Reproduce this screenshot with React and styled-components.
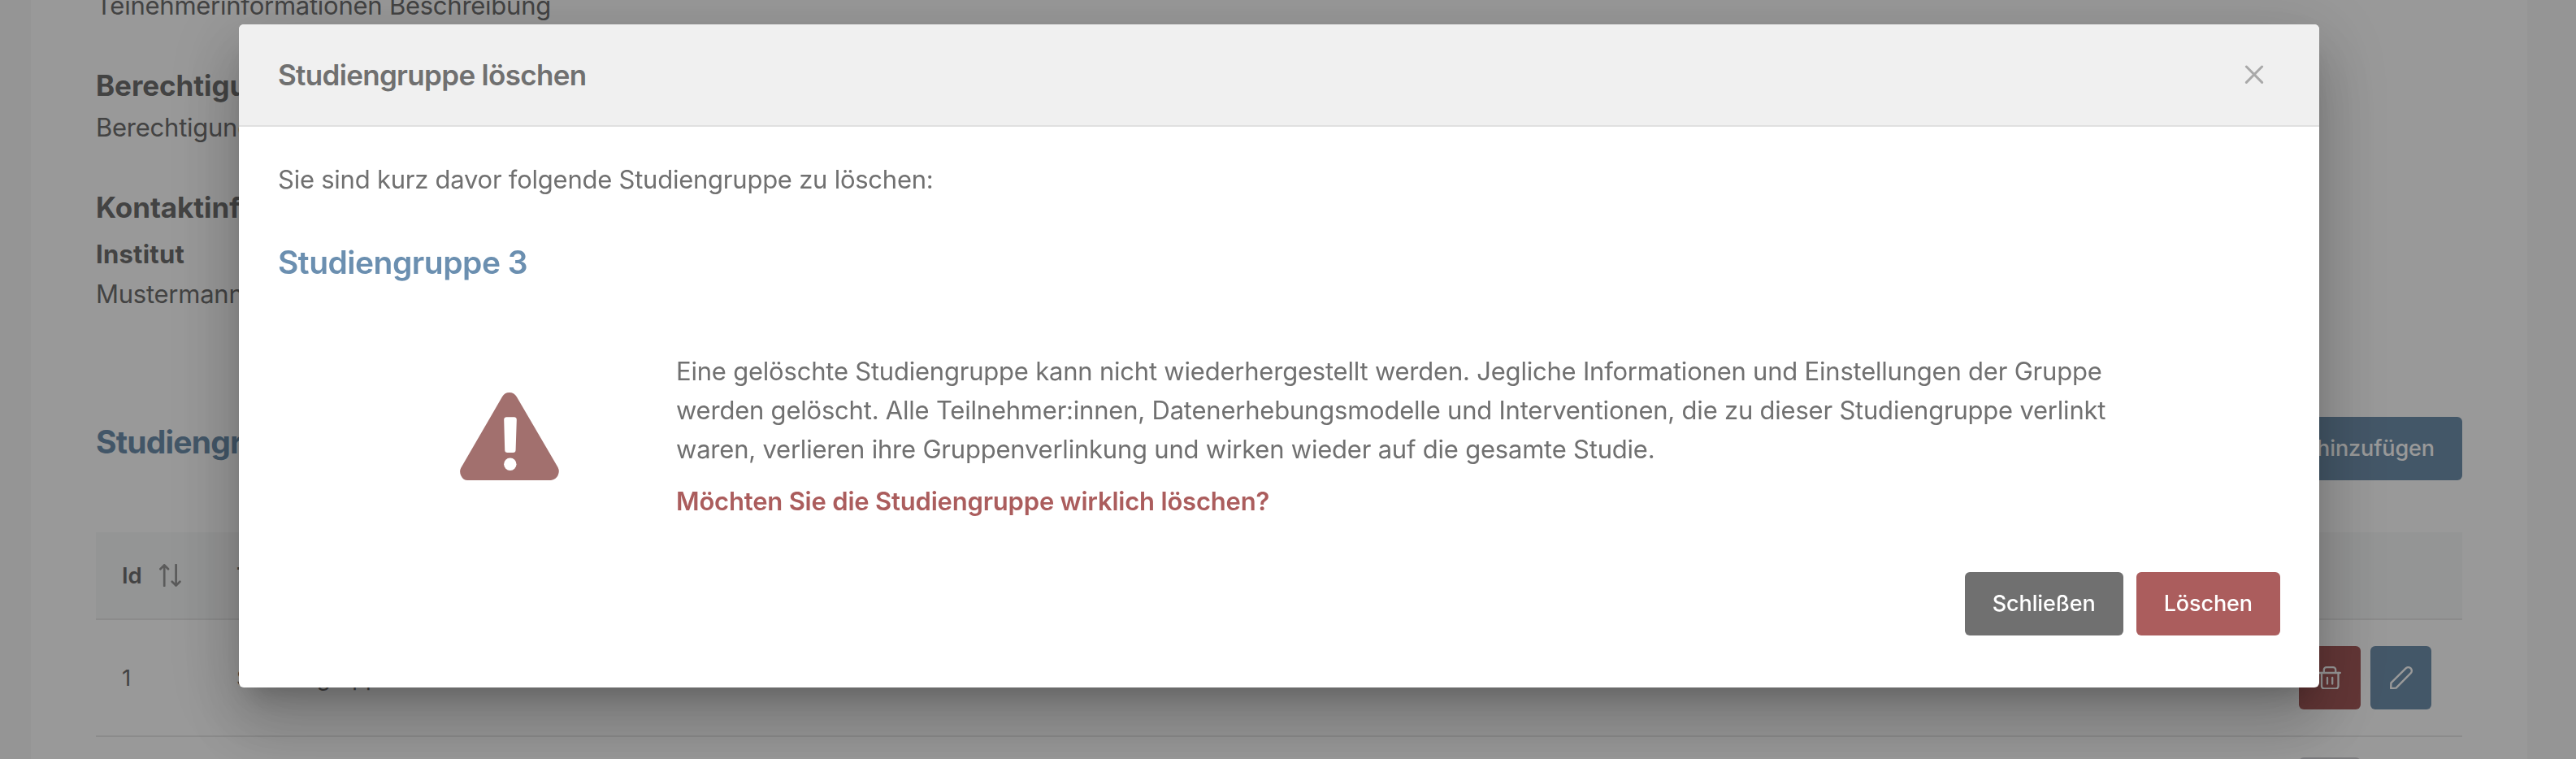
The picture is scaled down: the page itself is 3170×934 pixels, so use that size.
import React from 'react';
import styled, { createGlobalStyle } from 'styled-components';

const GlobalStyle = createGlobalStyle`
  * { box-sizing: border-box; }
  body {
    margin: 0;
    overflow: hidden;
    background: #f8f8f8;
    color: #707070;
    font-family: Inter, "Liberation Sans", sans-serif;
    font-size: 31px;
    line-height: 48px;
  }
  h1, h2, h3, h4, p { margin: 0; }
  svg { display: block; }
`;

const Page = styled.div`
  height: 934px;
  overflow: hidden;
  display: flex;
  padding: 0 60px 0 38px;
`;

const Card = styled.main`
  flex: 1;
  display: flex;
  flex-direction: column;
  padding: 0 80px;
  background: #fff;
`;

const InfoText = styled.p`
  flex: none;
  margin-top: ${(p) => p.$gap}px;
  letter-spacing: -0.25px;
`;

const InfoHeading = styled.h3`
  flex: none;
  margin-top: 52px;
  font-size: 35px;
  line-height: 44px;
  font-weight: 700;
  letter-spacing: -0.05px;
`;

const InfoLabel = styled.h4`
  flex: none;
  margin-top: 12px;
  font-size: 31px;
  font-weight: 700;
  letter-spacing: 0.25px;
`;

const SectionBar = styled.div`
  flex: none;
  display: flex;
  justify-content: space-between;
  align-items: flex-start;
  margin-top: 127px;
`;

const SectionTitle = styled.h2`
  margin-top: 7px;
  color: #6f90ad;
  font-size: 39px;
  font-weight: 700;
  letter-spacing: -0.8px;
`;

const Button = styled.button`
  height: 78px;
  padding: 0 34px;
  border: 0;
  border-radius: 6px;
  background: ${(p) => p.$color};
  color: #fff;
  font: 500 27px/42px Inter, "Liberation Sans", sans-serif;
  letter-spacing: -0.1px;
  white-space: nowrap;
`;

const Table = styled.div`
  flex: none;
  margin-top: 64px;
  font-size: 27.5px;
`;

const Row = styled.div`
  display: grid;
  grid-template-columns: 141px 1fr auto;
  align-items: center;
  height: 144px;
  border-bottom: 2px solid #e8e8e8;
`;

const HeadRow = styled(Row)`
  height: 108px;
  background: #f7f8f8;
  font-weight: 600;
`;

const LastRow = styled(Row)`
  align-items: start;
  padding-top: 25px;
`;

const Cell = styled.div`
  display: flex;
  align-items: center;
  gap: 21px;
  padding: 0 0 0 32px;
  white-space: nowrap;
`;

const Actions = styled.div`
  display: flex;
  gap: 12px;
  padding-right: 38px;
`;

const IconButton = styled.button`
  width: ${(p) => p.$width}px;
  height: 78px;
  padding: 0;
  border: 0;
  border-radius: 6px;
  display: flex;
  align-items: center;
  justify-content: center;
  background: ${(p) => p.$color};
  color: #fff;
`;

const Overlay = styled.div`
  position: fixed;
  inset: 0;
  display: flex;
  justify-content: center;
  align-items: flex-start;
  padding: 30px 22px 0 0;
  background: rgba(0, 0, 0, 0.4);
`;

const Dialog = styled.section`
  width: 2560px;
  height: 816px;
  border-radius: 6px;
  background: #fff;
  overflow: hidden;
  box-shadow: 0 22px 30px -14px rgba(0, 0, 0, 0.2),
    0 48px 76px 6px rgba(0, 0, 0, 0.14),
    0 18px 92px 16px rgba(0, 0, 0, 0.12);
`;

const DialogHeader = styled.header`
  display: flex;
  align-items: center;
  justify-content: space-between;
  height: 126px;
  padding: 0 48px;
  border-bottom: 2px solid #e0e0e0;
  background: #f0f0f0;
`;

const DialogTitle = styled.h2`
  font-size: 35px;
  line-height: 44px;
  font-weight: 600;
  letter-spacing: -0.68px;
`;

const CloseButton = styled.button`
  width: 64px;
  height: 64px;
  padding: 0;
  border: 0;
  display: flex;
  align-items: center;
  justify-content: center;
  background: transparent;
  color: #a9a9a9;
`;

const DialogBody = styled.div`
  padding: 41px 48px 0;
`;

const Lead = styled.p`
  letter-spacing: -0.24px;
`;

const GroupName = styled.h3`
  margin-top: 54px;
  color: #6b8fb0;
  font-size: 39px;
  font-weight: 600;
  letter-spacing: -0.5px;
`;

const Notice = styled.div`
  display: flex;
  align-items: center;
  margin-top: 86px;
`;

const NoticeIcon = styled.div`
  flex: none;
  width: 490px;
  padding-left: 224px;
`;

const NoticeText = styled.div`
  width: 1800px;
`;

const Explanation = styled.p`
  letter-spacing: -0.215px;
`;

const Question = styled.p`
  margin-top: 16px;
  color: #ab5d5d;
  font-weight: 600;
  letter-spacing: -0.2px;
`;

const DialogActions = styled.footer`
  display: flex;
  justify-content: flex-end;
  gap: 16px;
  margin-top: 63px;
`;

const Stroke = ({ w = 28, h = 28, width = 2.8, children }) => (
  <svg
    width={w}
    height={h}
    viewBox={`0 0 ${w} ${h}`}
    fill="none"
    stroke="currentColor"
    strokeWidth={width}
    strokeLinecap="round"
    strokeLinejoin="round"
  >
    {children}
  </svg>
);

const SortIcon = () => (
  <Stroke w={27} width={2.7}>
    <g opacity="0.7">
      <path d="M6.2 27V1.4M1.4 6.2 6.2 1.4l4.8 4.8" />
      <path d="M20.6 1v25.6M15.8 21.8l4.8 4.8 4.8-4.8" />
    </g>
  </Stroke>
);

const TrashIcon = () => (
  <Stroke width={2.3}>
    <path d="M1.2 8h25.6" />
    <path d="M6.8 7.6V4.2a3 3 0 0 1 3-3h8.4a3 3 0 0 1 3 3v3.4" />
    <path d="M4 8v16.3a3 3 0 0 0 3 3h14.5a3 3 0 0 0 3-3V8" />
    <path d="M11 14v7.6M17.2 14v7.6" />
  </Stroke>
);

const PencilIcon = () => (
  <Stroke width={2.4}>
    <path d="M1.2 27 1.4 20.4 19.6 2.4a4.2 4.2 0 0 1 6 6L7.6 26.6Z" />
  </Stroke>
);

const CloseIcon = () => (
  <Stroke w={24} h={24} width={3}>
    <path d="M2.4 2 21.6 21.4M21.6 2 2.4 21.4" />
  </Stroke>
);

const WarningIcon = () => (
  <svg width="122" height="108" viewBox="0 0 122 108">
    <path
      fill="#a2706e"
      d="M52 5.2Q55 0 60.8 0T69.8 5.2L120.5 92Q123 97 120.6 102T112 108H9.5Q4 108 1.4 102.5T1.4 92.5Z"
    />
    <path fill="#fff" d="M57.5 30.3h9a3.3 3.3 0 0 1 3.3 3.5l-1.2 37a3.3 3.3 0 0 1-3.3 3.2h-6.8a3.3 3.3 0 0 1-3.3-3.2l-1-37a3.3 3.3 0 0 1 3.3-3.5Z" />
    <circle cx="61.8" cy="88.2" r="7.7" fill="#fff" />
  </svg>
);

export default function App() {
  return (
    <>
      <GlobalStyle />
      <Page>
        <Card>
          <InfoText $gap={-17}>Teinehmerinformationen Beschreibung</InfoText>
          <InfoHeading>Berechtigungen</InfoHeading>
          <InfoText $gap={6}>Berechtigungen</InfoText>
          <InfoHeading>Kontaktinformationen</InfoHeading>
          <InfoLabel>Institut</InfoLabel>
          <InfoText $gap={1}>Mustermann</InfoText>
          <SectionBar>
            <SectionTitle>Studiengruppen</SectionTitle>
            <Button $color="#7191ad">Studiengruppe hinzufügen</Button>
          </SectionBar>
          <Table>
            <HeadRow>
              <Cell>Id <SortIcon /></Cell>
              <Cell>Titel</Cell>
            </HeadRow>
            <Row>
              <Cell>1</Cell>
              <Cell>Studiengruppe 1</Cell>
              <Actions>
                <IconButton $width={76} $color="#a65b5b"><TrashIcon /></IconButton>
                <IconButton $width={75} $color="#7191ad"><PencilIcon /></IconButton>
              </Actions>
            </Row>
            <LastRow>
              <Cell />
              <Cell />
              <Actions>
                <IconButton $width={76} $color="#d0d0d4" />
                <IconButton as="span" $width={75} $color="transparent" />
              </Actions>
            </LastRow>
          </Table>
        </Card>
      </Page>
      <Overlay>
        <Dialog role="dialog" aria-modal="true">
          <DialogHeader>
            <DialogTitle>Studiengruppe löschen</DialogTitle>
            <CloseButton><CloseIcon /></CloseButton>
          </DialogHeader>
          <DialogBody>
            <Lead>Sie sind kurz davor folgende Studiengruppe zu löschen:</Lead>
            <GroupName>Studiengruppe 3</GroupName>
            <Notice>
              <NoticeIcon><WarningIcon /></NoticeIcon>
              <NoticeText>
                <Explanation>
                  Eine gelöschte Studiengruppe kann nicht wiederhergestellt werden. Jegliche
                  Informationen und Einstellungen der Gruppe werden gelöscht. Alle Teilnehmer:innen,
                  Datenerhebungsmodelle und Interventionen, die zu dieser Studiengruppe verlinkt
                  waren, verlieren ihre Gruppenverlinkung und wirken wieder auf die gesamte Studie.
                </Explanation>
                <Question>Möchten Sie die Studiengruppe wirklich löschen?</Question>
              </NoticeText>
            </Notice>
            <DialogActions>
              <Button $color="#707070">Schließen</Button>
              <Button $color="#ab5d5d">Löschen</Button>
            </DialogActions>
          </DialogBody>
        </Dialog>
      </Overlay>
    </>
  );
}
